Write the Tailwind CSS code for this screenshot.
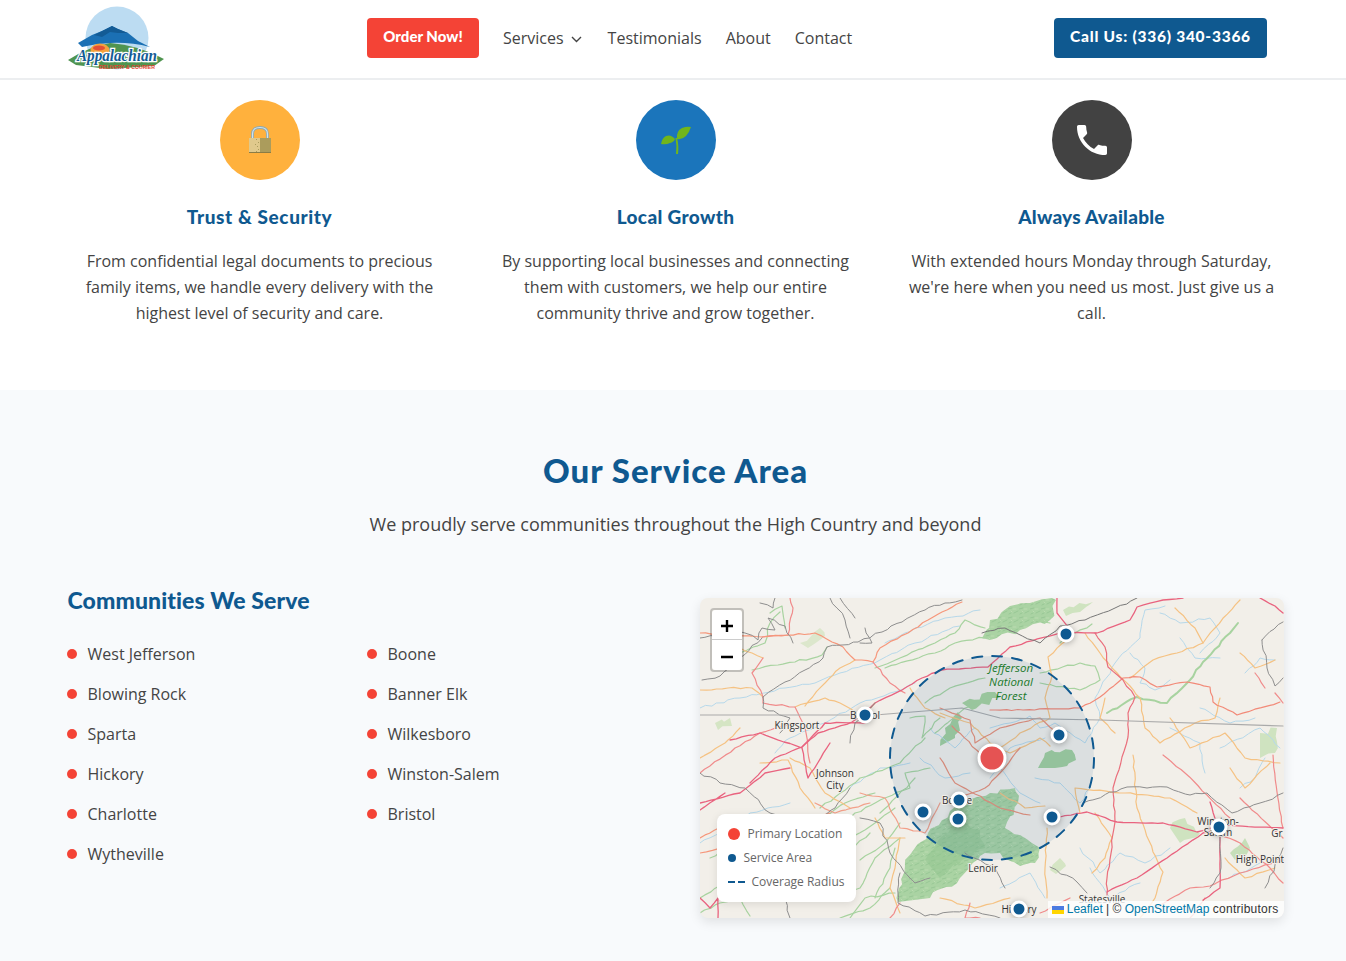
<!DOCTYPE html>
<html lang="en">
<head>
  <meta charset="UTF-8" />
  <meta name="viewport" content="width=device-width, initial-scale=1.0" />
  <title>Appalachian Delivery & Courier</title>
  <script src="https://cdn.jsdelivr.net/npm/@tailwindcss/browser@4"></script>
</head>
<body class="bg-white text-[#444] font-['Open_Sans',sans-serif] overflow-x-hidden">
  <!-- header -->
  <header class="h-[80px] bg-white border-b-2 border-[#eceef0] flex items-center pl-[68px] pr-[79px] pb-[2px]">
    <svg class="w-[97px] h-[66px] shrink-0 overflow-visible" viewBox="0 0 97 66">
      <circle cx="49" cy="33" r="31.500" fill="#bcdcf2" />
      <path d="M0 55 Q20 42 42 38 Q70 40 96 54 L86 61 L40 64 L8 60 Z" fill="#4f9450" />
      <path d="M10 38 L24 30 L34 26 L44 21 L50 24 L60 28 L70 36 L82 42 Q62 37 42 38 Q26 39 14 42Z" fill="#1b70b4" />
      <path d="M26 30 L34 26 L44 21 L50 24 L60 28 L50 28 L42 27 L34 32Z" fill="#135b95" />
      <ellipse cx="32" cy="45" rx="9.500" ry="6.500" fill="#f4a23e" />
      <ellipse cx="31" cy="43" rx="6" ry="2.500" fill="#e54f35" />
      <text x="9" y="56" textLength="80" lengthAdjust="spacingAndGlyphs" font-family="'Liberation Serif',serif" font-style="italic" font-weight="700" font-size="16" fill="#135b95" stroke="#fff" stroke-width="2.500" paint-order="stroke">Appalachian</text>
      <text x="31" y="63.500" textLength="56" lengthAdjust="spacingAndGlyphs" font-family="'Liberation Sans',sans-serif" font-weight="700" font-size="4.800" fill="#e5402f">DELIVERY &amp; COURIER</text>
    </svg>
    <nav class="ml-[202px] flex items-center gap-6 text-[16px]">
      <a class="h-10 w-[112px] rounded bg-[#f44336] text-white font-['Lato',sans-serif] font-black text-[15px] flex items-center justify-center pb-[3px]">Order Now!</a>
      <a class="flex items-center gap-[7px]">Services
        <svg class="w-[13px] h-[12px] mt-[1px]" viewBox="0 0 13 12" fill="none" stroke="#444" stroke-width="1.400"><path d="M1 4 L5.500 8.500 L10 4" /></svg>
      </a>
      <a>Testimonials</a>
      <a>About</a>
      <a>Contact</a>
    </nav>
    <a class="ml-auto h-10 w-[213px] rounded bg-[#0f5990] text-white font-['Lato',sans-serif] font-black text-[15.5px] tracking-[0.75px] flex items-center justify-center pb-[3px]">Call Us: (336) 340-3366</a>
  </header>

  <!-- values -->
  <section class="h-[310px] pt-5">
    <div class="ml-[67.5px] w-[1216px] grid grid-cols-3 gap-8 text-center">
      <div>
        <div class="w-20 h-20 mx-auto rounded-full bg-[#ffb13d] flex items-center justify-center">
          <svg class="w-[24px] h-[28px]" viewBox="0 0 24 28">
            <path d="M4.500 12 V8 Q4.500 1.500 12 1.500 Q19.500 1.500 19.500 8 V12" fill="none" stroke="#8fa9b0" stroke-width="2.800" />
            <path d="M4.500 12 V8 Q4.500 1.500 12 1.500 Q19.500 1.500 19.500 8 V12" fill="none" stroke="#cfe3ee" stroke-width="1.200" />
            <rect x="1" y="12" width="22" height="15" fill="#ab9c5c" />
            <rect x="1" y="12" width="11" height="15" fill="#e0c98c" />
            <rect x="8" y="13" width="1" height="1" fill="#ab9c5c" /><rect x="10" y="16" width="1" height="1" fill="#ab9c5c" /><rect x="9" y="20" width="1" height="1" fill="#ab9c5c" /><rect x="10" y="23" width="1" height="1" fill="#ab9c5c" /><rect x="7" y="18" width="1" height="1" fill="#ab9c5c" /><rect x="8" y="25" width="1" height="1" fill="#ab9c5c" />
            <rect x="1" y="26" width="22" height="1" fill="#8a7c45" />
          </svg>
        </div>
        <h3 class="mt-[25px] font-['Lato',sans-serif] font-black text-[19px] leading-[24px] tracking-[0.6px] text-[#0f5990]">Trust &amp; Security</h3>
        <p class="mt-[19px] px-[2px] leading-[26px]">From confidential legal documents to precious family items, we handle every delivery with the highest level of security and care.</p>
      </div>
      <div>
        <div class="w-20 h-20 mx-auto rounded-full bg-[#1b75bb] flex items-center justify-center">
          <svg class="w-[32px] h-[30px]" viewBox="0 0 32 30">
            <path d="M17 14 Q16 6 22 3 Q27 1 31 2 Q29 8 26 11 Q22 15 17 14Z" fill="#71b51c" />
            <path d="M15 14 Q11 9 6 11 Q2 13 1 19 Q6 20 10 18 Q14 17 15 14Z" fill="#71b51c" />
            <path d="M15.500 13 Q17 20 16 29 H18 Q19 20 17 13Z" fill="#71b51c" />
          </svg>
        </div>
        <h3 class="mt-[25px] font-['Lato',sans-serif] font-black text-[19px] leading-[24px] tracking-[0.35px] text-[#0f5990]">Local Growth</h3>
        <p class="mt-[19px] leading-[26px]">By supporting local businesses and connecting them with customers, we help our entire community thrive and grow together.</p>
      </div>
      <div>
        <div class="w-20 h-20 mx-auto rounded-full bg-[#424242] flex items-center justify-center">
          <svg class="w-[40px] h-[40px]" viewBox="0 0 24 24" fill="#fff"><path d="M6.620 10.790c1.440 2.830 3.760 5.140 6.590 6.590l2.200-2.200c.27-.27.67-.36 1.020-.24 1.120.37 2.330.57 3.570.57.55 0 1 .45 1 1V20c0 .55-.45 1-1 1-9.390 0-17-7.610-17-17 0-.55.45-1 1-1h3.500c.55 0 1 .45 1 1 0 1.250.2 2.450.57 3.570.11.35.03.74-.25 1.020l-2.200 2.200z" /></svg>
        </div>
        <h3 class="mt-[25px] font-['Lato',sans-serif] font-black text-[19px] leading-[24px] tracking-[0.25px] text-[#0f5990]">Always Available</h3>
        <p class="mt-[19px] leading-[26px]">With extended hours Monday through Saturday, we're here when you need us most. Just give us a call.</p>
      </div>
    </div>
  </section>

  <!-- service area -->
  <section class="bg-[#f8fafc] h-[571px] pt-[58px]">
    <div class="ml-[67.5px] w-[1216px]">
      <h2 class="text-center font-['Lato',sans-serif] font-black text-[33px] leading-[44px] tracking-[1px] text-[#0f5990]">Our Service Area</h2>
      <p class="mt-[19px] text-center text-[18px] leading-[26px]">We proudly serve communities throughout the High Country and beyond</p>
      <div class="mt-[60px] flex">
        <div class="w-[632px] shrink-0 -mt-[12px]">
          <h3 class="font-['Lato',sans-serif] font-black text-[23px] leading-[30px] tracking-[0.1px] text-[#0f5990]">Communities We Serve</h3>
          <ul class="mt-[19px] grid grid-cols-[300px_300px] auto-rows-[40px]">
            <li class="flex items-center gap-[11px]"><span class="-ml-px w-[10px] h-[10px] rounded-full bg-[#f44336]"></span>West Jefferson</li>
            <li class="flex items-center gap-[11px]"><span class="-ml-px w-[10px] h-[10px] rounded-full bg-[#f44336]"></span>Boone</li>
            <li class="flex items-center gap-[11px]"><span class="-ml-px w-[10px] h-[10px] rounded-full bg-[#f44336]"></span>Blowing Rock</li>
            <li class="flex items-center gap-[11px]"><span class="-ml-px w-[10px] h-[10px] rounded-full bg-[#f44336]"></span>Banner Elk</li>
            <li class="flex items-center gap-[11px]"><span class="-ml-px w-[10px] h-[10px] rounded-full bg-[#f44336]"></span>Sparta</li>
            <li class="flex items-center gap-[11px]"><span class="-ml-px w-[10px] h-[10px] rounded-full bg-[#f44336]"></span>Wilkesboro</li>
            <li class="flex items-center gap-[11px]"><span class="-ml-px w-[10px] h-[10px] rounded-full bg-[#f44336]"></span>Hickory</li>
            <li class="flex items-center gap-[11px]"><span class="-ml-px w-[10px] h-[10px] rounded-full bg-[#f44336]"></span>Winston-Salem</li>
            <li class="flex items-center gap-[11px]"><span class="-ml-px w-[10px] h-[10px] rounded-full bg-[#f44336]"></span>Charlotte</li>
            <li class="flex items-center gap-[11px]"><span class="-ml-px w-[10px] h-[10px] rounded-full bg-[#f44336]"></span>Bristol</li>
            <li class="flex items-center gap-[11px]"><span class="-ml-px w-[10px] h-[10px] rounded-full bg-[#f44336]"></span>Wytheville</li>
          </ul>
        </div>

        <!-- map -->
        <div class="relative w-[584px] h-[320px] rounded-lg overflow-hidden bg-[#f2efe9] shadow-[0_4px_12px_rgba(0,0,0,0.1)] mt-px">
          <svg class="absolute inset-0 w-full h-full" viewBox="0 0 584 320" fill="none" stroke-linejoin="round" stroke-linecap="round">
            <defs>
              <pattern id="forest" width="11" height="9" patternUnits="userSpaceOnUse">
                <rect width="11" height="9" fill="#aad3a3" />
                <path d="M0 2 L4 1 M6 6 L10 4 M1 7 L3 6" stroke="#98c795" stroke-width="1" />
                <path d="M5 2 L8 2 M3 4 L4 5" stroke="#bcdcb2" stroke-width="1" />
              </pattern>
            </defs>
            <!-- forests -->
            <g data-w="5">
              <path fill="url(#forest)" d="M198 304 L205 262 L228 235 L250 213 L265 205 L290 195 L315 190 L318 205 L305 230 L340 250 L335 265 L320 268 L300 255 L280 258 L260 280 L230 300Z" />
              <path fill="#90c38e" fill-opacity=".5" d="M225 262 L240 240 L262 222 L280 232 L285 250 L262 262 L240 280Z" />
              <path fill="url(#forest)" d="M282 40 L290 22 L310 8 L352 0 L356 2 L350 22 L320 32 L290 42Z" />
              <path fill="#a3cf9d" d="M338 170 L345 155 L372 152 L376 162 L355 170Z" />
              <path fill="#a9d29f" d="M262 105 L295 94 L300 100 L272 112Z" />
              <path fill="#a3cf9d" d="M240 148 L245 130 L258 114 L262 120 L255 140Z" />
              <path fill="#cfe3c0" d="M363 12 L393 4 L380 14 L366 18Z" />
              <path fill="#cfe3c0" d="M470 230 L485 220 L500 235 L480 245Z" />
              <path fill="#c6dfb9" d="M530 255 L545 240 L550 250 L535 262Z" />
              <path fill="#cfe3c0" d="M560 135 L577 130 L575 155 L560 160Z" />
              <path fill="#dce7cc" d="M100 45 L120 30 L125 38 L108 50Z" />
              <path fill="#d5e5c4" d="M350 272 L360 260 L366 268 L356 276Z" />
              <path fill="#d5e5c4" d="M15 125 L30 120 L32 128 L18 132Z" />
            </g>
            <!-- rivers -->
            <g data-w="2.500" stroke="#b6d8ea" stroke-width="1">
              <path d="M0 110 L40 100 L85 90 L115 85 L140 75 L180 62 L215 45 L260 28" />
              <path d="M185 45 L215 30 L245 20 L263 18 L280 12" />
              <path d="M75 155 L90 140 L125 125 L160 105 L190 95 L215 85" />
              <path d="M290 130 L310 125 L330 118 L340 130 L355 125 L385 145 L400 120 L395 100 L415 65 L440 40 L445 12 L465 8" />
              <path d="M430 55 L445 70 L440 85 L455 92 L470 82 M500 55 L520 35 L510 20 L480 25 L460 15" />
              <path d="M335 180 L360 185 L380 205 L390 190 M300 170 L320 195 L340 205 M290 180 L310 150 L345 140" />
              <path d="M380 250 L400 275 L420 255 L445 265 L470 250 M520 150 L560 130 L580 150" />
              <path d="M540 190 L555 180 L565 160 M545 75 L560 60 L575 62 M500 110 L530 125 L555 120" />
              <path d="M0 245 L20 235 L50 215 L90 205 M150 190 L180 170 L210 165" />
              <path d="M390 270 L410 300 L440 285 M300 290 L330 275 L345 300" />
              <path d="M230 130 L255 150 L275 130 M220 160 L245 180 L270 175" />
              <path d="M480 40 L495 60 L520 60 M470 130 L500 145 L505 175 M530 280 L560 265" />
            </g>
            <!-- green roads -->
            <g data-w="2" stroke="#a8d3a0" stroke-width="1.200">
              <path d="M52 72 L78 67 L95 64 L122 57 L127 49" />
              <path d="M70 15 L82 8 L85 30 M40 55 L65 45 L70 25 L80 14" />
              <path d="M175 70 L200 60 L235 45 L255 35 L265 22 L285 30" />
              <path d="M185 70 L235 55 L255 45 L290 38" />
              <path d="M340 75 L380 65 L395 68 L400 82 L380 92 L340 85" />
              <path d="M407 115 L437 99 L467 105 L490 82 L503 64 L530 35 L538 25" stroke-width="2" />
              <path d="M120 210 L160 180 L200 165 L225 140" />
              <path d="M130 235 L155 215 L185 200 L210 190 L205 175 L230 170" />
              <path d="M135 300 L160 290 L175 260 L200 240 M150 320 L165 300 L195 295" />
              <path d="M0 300 L25 285 L40 260 M10 260 L35 245 M180 215 L215 180" />
              <path d="M210 120 L225 118 L222 140 L240 120" />
              <path d="M115 225 L145 205 L175 195 M150 240 L175 225 L195 210 M160 262 L185 245 L200 225" />
              <path d="M125 265 L150 250 L170 235 M175 300 L190 270 L195 250 M140 320 L170 310 L190 290" />
              <path d="M115 295 L135 270 L155 272 M0 315 L20 305 L40 300 L50 318" />
              <path d="M225 105 L250 90 L285 80 M235 135 L265 110 L285 100" />
              <path d="M330 20 L350 25 M392 26 L375 35 L360 45" />
            </g>
            <!-- orange roads -->
            <g data-w="1.500" stroke="#f5c283" stroke-width="1.200">
              <path d="M0 92 L28 90 L52 90 L63 99 M63 60 L52 55 L40 50" />
              <path d="M95 109 L125 100 L140 105 L162 118 L175 105 M105 108 L125 85 L140 70 L155 62" />
              <path d="M348 59 L367 42 M348 59 L352 78 L345 100 L350 120 L320 135 L300 150" />
              <path d="M430 80 L453 62 L477 55 L503 45 L515 30 L540 2" />
              <path d="M385 35 L400 55 L412 70 L430 88 L440 100 L445 130 L460 145 L495 125 L515 120 L520 100" />
              <path d="M470 120 L490 150 L525 135 L545 160 L580 165 M405 100 L400 120 L415 135" />
              <path d="M0 160 L25 145 L40 130 M90 160 L110 170 L125 195 L150 210" />
              <path d="M60 165 L88 162 L100 190 L115 210 M175 220 L185 240 L205 240" />
              <path d="M347 230 L345 270 L347 300 M395 215 L412 240 L405 260 L392 275" />
              <path d="M433 157 L437 210 L453 254 L463 274 L455 300 L440 320" />
              <path d="M530 170 L545 190 L570 165 M525 260 L545 280 L575 270" />
              <path d="M380 215 L375 190 L425 195 L470 200 L497 215" />
              <path d="M240 115 L270 125 L290 145 L310 155 L340 140 L350 148" />
              <path d="M210 90 L225 110 L245 120 M300 195 L325 210 L345 208" />
              <path d="M200 240 L195 270 L190 290 L200 315 M240 300 L275 310 L310 300" />
              <path d="M475 10 L495 30 L503 45 M540 55 L555 70 L575 62" />
            </g>
            <!-- pink roads -->
            <g data-w="1.500" stroke="#f08b8b" stroke-width="1.200">
              <path d="M62 39 L88 37 L93 10 L90 0" />
              <path d="M0 35 L62 39 L88 37 L115 35 L132 44 L143 49 L155 62 L173 64 L180 50 L208 35 L228 22 L242 14 L262 4" stroke="#f6977b" />
              <path d="M173 64 L190 85 L205 95 M63 60 L52 75 L63 99 L63 105" />
              <path d="M63 105 L95 109 L105 130 L110 165 M0 175 L35 150 L60 135 L95 125" />
              <path d="M240 110 L270 122 L275 145 L300 130 L340 120 L360 138 M252 128 L285 160" stroke="#e9917a" />
              <path d="M290 112 L323 112 L380 110 L400 99 L423 80 L440 79 L457 89 L487 84 L510 89 L513 104 L537 117 L580 104" stroke="#f28a78" />
              <path d="M395 35 L405 49 L408 69 L423 82 L435 99 L428 115 L428 139 L422 159 L413 190 L415 224 L407 280 L407 297" stroke="#ea6f7c" />
              <path d="M320 150 L300 175 L285 190 L255 200 M240 160 L255 185 L300 210 L330 217" stroke="#ea9079" />
              <path d="M160 195 L185 200 L200 230 L225 235 L240 205 M115 205 L135 215 L170 205" stroke="#f2a08a" />
              <path d="M0 240 L30 225 M85 230 L130 215 M0 255 L25 250 L40 225" stroke="#f6977b" />
              <path d="M463 157 L485 175 L507 197 L530 220 M573 157 L577 194 L583 230 M540 200 L583 240" />
              <path d="M575 95 L583 105 M555 75 L565 90" />
              <path d="M455 310 L490 290 L510 288 L540 275 L583 262" />
              <path d="M520 237 L540 245 L570 270 L583 285" />
              <path d="M200 305 L190 320 M270 305 L265 320 L280 320" />
              <path d="M340 315 L370 300 M490 320 L505 300" />
            </g>
            <g data-w="1" stroke="#e9637f" stroke-width="1.300">
              <path d="M102 149 L118 135 L152 124 L175 105 L202 92 L222 80 L242 72 L288 69 L310 49 L360 35 L397 35 L430 22 L437 9 L463 2 L483 0" />
              <path d="M357 0 L357 15 L368 29 M560 0 L575 8 L583 15" />
              <path d="M50 185 L75 160 L102 149 L125 125 L165 125 M30 142 L60 135 L102 150 L108 180 L130 145" />
              <path d="M0 205 L40 195 L65 175 L90 170 M0 212 L25 195" />
              <path d="M360 219 L387 214 L417 224 L463 225 L497 234 L520 227 L583 230" />
              <path d="M407 294 L437 280 L467 260 L503 235 L520 230" />
              <path d="M510 204 L520 237 L520 290 L503 302" />
              <path d="M0 300 L10 310 L18 300 L18 320" />
            </g>
            <!-- grey borders -->
            <g data-w="2.500" stroke="#8e8e8e" stroke-width="1">
              <path d="M63 99 L85 84 L105 72 L123 60 L127 49 L142 47 L158 44 L182 34 L202 24 L225 12 L245 5 L262 2" />
              <path d="M0 40 L15 38 L30 30 L45 35 L58 42 L62 30 L75 32 L68 20 L85 28 L93 45 M2 82 L20 78 L40 60 L62 40" />
              <path d="M63 99 L63 110 L90 120 L80 135 M60 5 L73 10 L75 0 M130 0 L145 22 L150 40 M165 30 L172 45 L160 45" />
              <path d="M175 105 L155 125 L150 145 M140 0 L155 20" />
              <path d="M282 35 L305 30 L340 45 L360 28 L385 22 L415 10 L437 0" stroke="#777" />
              <path d="M562 42 L567 70 L575 88 L583 80 M562 42 L583 24" />
              <path d="M0 175 L20 185 L45 190 L70 215 L85 222 L110 225 L135 210 L150 190" />
              <path d="M160 220 L180 225 L190 255 L215 285 L230 280 M200 275 L198 305 L225 318 L265 312 L300 320" />
              <path d="M75 280 L85 300 L90 320 M20 265 L45 250 L70 270" />
              <path d="M350 269 L377 284 L387 295 M383 205 L427 189 L447 190 L467 189 L490 197 L507 195 L532 215 L560 205 L583 195" />
              <path d="M265 255 L295 270 L305 290" />
              <path d="M520 237 L520 275 L510 290 M565 290 L583 250" />
            </g>
            <path d="M0 117 L175 117 L262 110 L300 120 L400 122 L583 128" stroke="#aaa" stroke-width="1.200" />
            <!-- coverage radius -->
            <circle cx="292" cy="160" r="102" fill="#0f5990" fill-opacity=".1" stroke="#0f5990" stroke-width="2" stroke-dasharray="10 10" />
            <!-- labels -->
            <g font-family="'Open Sans',sans-serif" font-size="10" fill="#333" stroke="#f2efe9" stroke-width="2" paint-order="stroke" text-anchor="middle">
              <text x="97" y="131">Kingsport</text>
              <text x="165" y="121">Bristol</text>
              <text x="135" y="179">Johnson</text>
              <text x="135" y="191">City</text>
              <text x="257" y="206">Boone</text>
              <text x="283" y="274">Lenoir</text>
              <text x="518" y="227">Winston-</text>
              <text x="518" y="238">Salem</text>
              <text x="560" y="265">High Point</text>
              <text x="577" y="239">Gr</text>
              <text x="402" y="305">Statesville</text>
              <text x="319" y="315">Hickory</text>
            </g>
            <g font-family="'Open Sans',sans-serif" font-size="11.500" font-style="italic" fill="#1b7a2c" text-anchor="middle">
              <text x="311" y="74">Jefferson</text>
              <text x="311" y="88">National</text>
              <text x="311" y="102">Forest</text>
            </g>
            <!-- markers -->
            <g fill="#0f5990" stroke="#fff" stroke-width="3" class="drop-shadow-[0_1px_3px_rgba(0,0,0,0.3)]">
              <circle cx="165" cy="117" r="7" />
              <circle cx="366" cy="36" r="7" />
              <circle cx="359" cy="137" r="7" />
              <circle cx="259" cy="202" r="7" />
              <circle cx="258" cy="221" r="7" />
              <circle cx="223" cy="214" r="7" />
              <circle cx="352" cy="219" r="7" />
              <circle cx="519" cy="229" r="7" />
              <circle cx="319" cy="311" r="7" />
            </g>
            <circle cx="292" cy="160" r="13" fill="#e55353" stroke="#fff" stroke-width="3" class="drop-shadow-[0_1px_3px_rgba(0,0,0,0.3)]" />
          </svg>

          <!-- zoom control -->
          <div class="absolute left-[10px] top-[10px] w-[34px] rounded border-2 border-black/20 bg-clip-padding">
            <div class="h-[30px] bg-white rounded-t-sm border-b border-[#ccc] flex items-center justify-center">
              <svg class="w-[14px] h-[14px] mt-[3px]" viewBox="0 0 14 14"><path d="M1 7 H13 M7 1 V13" stroke="#000" stroke-width="2.400" /></svg>
            </div>
            <div class="h-[30px] bg-white rounded-b-sm flex items-center justify-center">
              <svg class="w-[14px] h-[14px] mt-[4px]" viewBox="0 0 14 14"><path d="M1 7 H13" stroke="#000" stroke-width="2.400" /></svg>
            </div>
          </div>

          <!-- legend -->
          <div class="absolute left-[17px] top-[216px] w-[139px] h-[88px] rounded-lg bg-white shadow-[0_2px_8px_rgba(0,0,0,0.1)] text-[12px] text-[#666] pl-[11px] flex flex-col justify-center gap-[6px]">
            <div class="flex items-center gap-[8px] h-[18px]"><span class="w-3 h-3 rounded-full bg-[#f44336]"></span>Primary Location</div>
            <div class="flex items-center gap-[8px] h-[18px]"><span class="w-2 h-2 rounded-full bg-[#0f5990]"></span>Service Area</div>
            <div class="flex items-center gap-[7px] h-[18px]">
              <svg class="w-[17px] h-[2px]" viewBox="0 0 17 2"><path d="M0 1 H7 M10 1 H17" stroke="#0f5990" stroke-width="2" /></svg>
              Coverage Radius</div>
          </div>

          <!-- attribution -->
          <div class="absolute right-0 bottom-0 h-[17px] pl-[4px] pr-[5px] bg-white/80 text-[12px] leading-[17px] text-[#333] font-['Liberation_Sans',sans-serif] flex items-center whitespace-pre">
            <svg class="w-[12px] h-[8px] mr-[3px]" viewBox="0 0 12 8"><rect width="12" height="4" fill="#4c7be1" /><rect y="4" width="12" height="4" fill="#ffd500" /></svg><span><span class="text-[#0078a8]">Leaflet</span> | © <span class="text-[#0078a8]">OpenStreetMap</span> <span class="tracking-[0.25px]">contributors</span></span></div>
        </div>
      </div>
    </div>
  </section>

  <script>
    // roughen the hand traced map lines so they read like roads and rivers
    let seed = 7;
    const rnd = () => (seed = (seed * 16807) % 2147483647) / 2147483647 - 0.5;
    document.querySelectorAll("g[data-w]").forEach(g => {
      const amp = parseFloat(g.dataset.w);
      g.querySelectorAll("path").forEach(p => {
        let out = "", x = 0, y = 0;
        for (const [, cmd, a, b] of p.getAttribute("d").matchAll(/([MLZ])\s*([\d.]*)\s*([\d.]*)/g)) {
          if (cmd === "Z") { out += "Z"; continue; }
          const nx = +a, ny = +b;
          if (cmd === "L") {
            const steps = Math.max(1, Math.round(Math.hypot(nx - x, ny - y) / 6));
            for (let i = 1; i < steps; i++) {
              out += `L${(x + (nx - x) * i / steps + rnd() * amp).toFixed(1)} ${(y + (ny - y) * i / steps + rnd() * amp).toFixed(1)}`;
            }
          }
          out += `${cmd}${nx} ${ny}`;
          x = nx; y = ny;
        }
        p.setAttribute("d", out);
      });
    });
  </script>
</body>
</html>
